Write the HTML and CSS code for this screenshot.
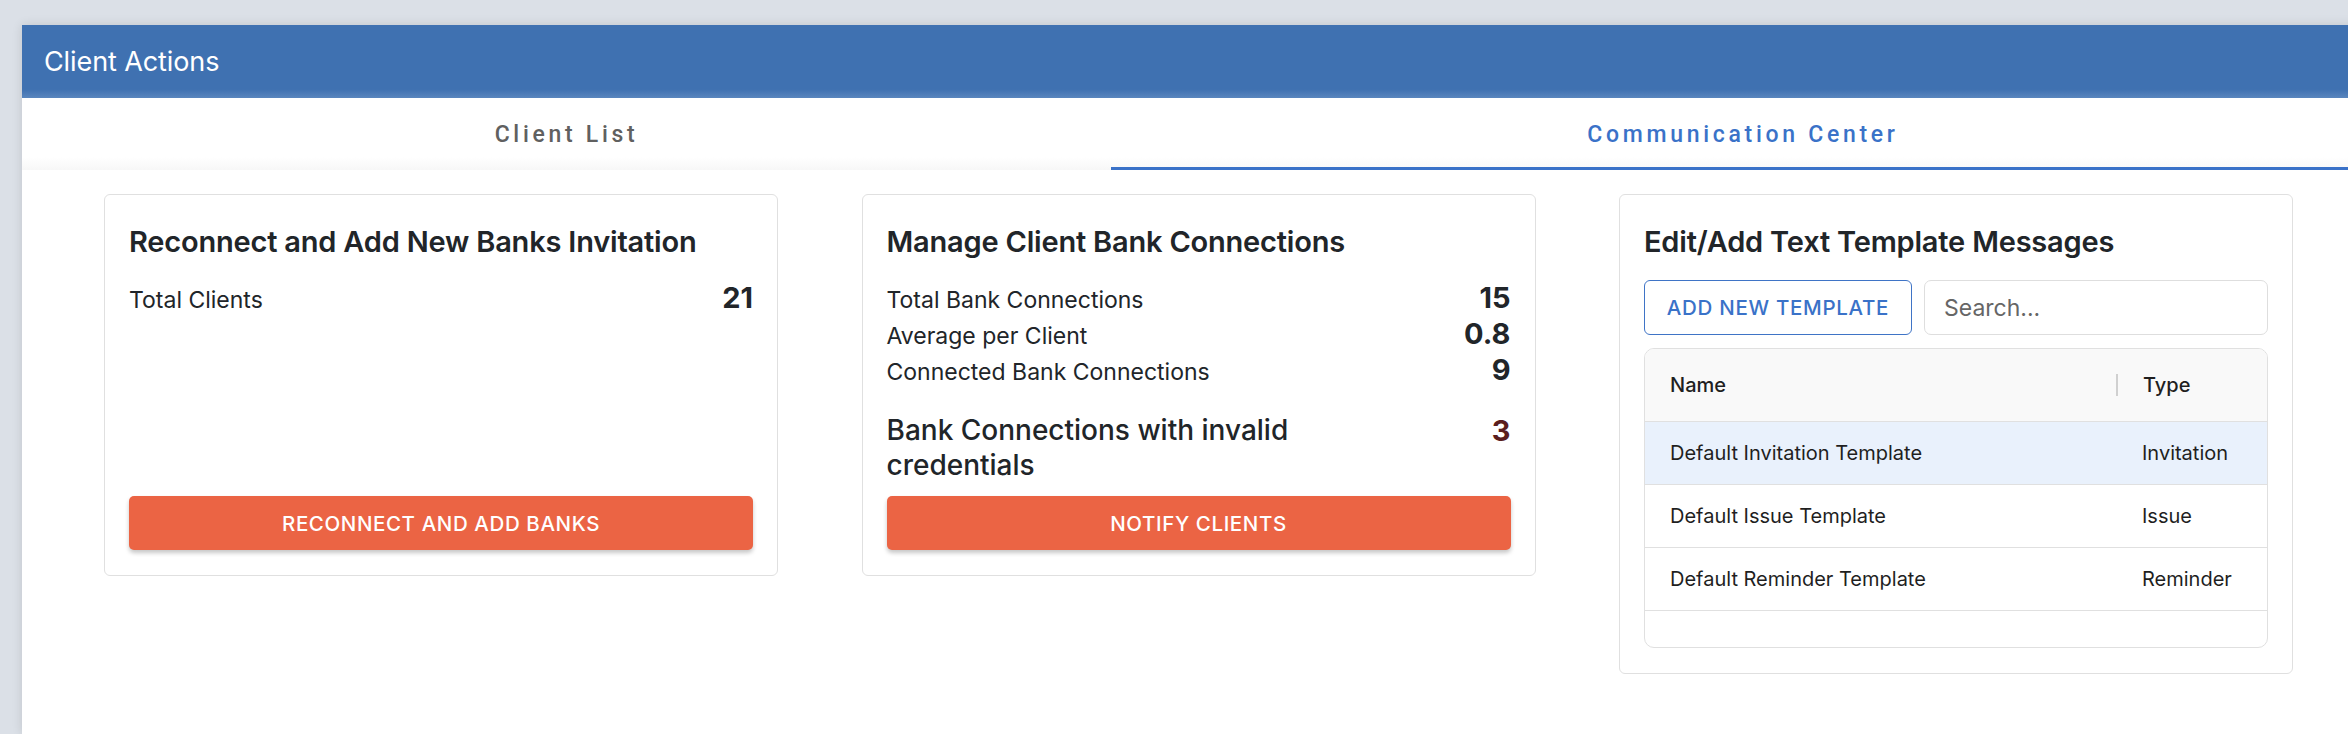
FILE: index.html
```html
<!DOCTYPE html>
<html lang="en">
<head>
<meta charset="utf-8">
<title>Client Actions</title>
<link rel="stylesheet" href="styles.css">
</head>
<body>
<div class="page">
  <div class="panel">
    <header class="panel-header">Client Actions</header>
    <nav class="tabs">
      <div class="tab">Client List</div>
      <div class="tab active">Communication Center</div>
    </nav>
    <main class="content">
      <section class="card stat-card">
        <h2 class="card-title">Reconnect and Add New Banks Invitation</h2>
        <div class="stats">
          <div class="stat-row"><span class="stat-label">Total Clients</span><span class="stat-value">21</span></div>
        </div>
        <button class="btn-primary">Reconnect and Add Banks</button>
      </section>

      <section class="card stat-card">
        <h2 class="card-title">Manage Client Bank Connections</h2>
        <div class="stats">
          <div class="stat-row"><span class="stat-label">Total Bank Connections</span><span class="stat-value">15</span></div>
          <div class="stat-row"><span class="stat-label">Average per Client</span><span class="stat-value">0.8</span></div>
          <div class="stat-row"><span class="stat-label">Connected Bank Connections</span><span class="stat-value">9</span></div>
        </div>
        <div class="invalid-row">
          <span class="invalid-label">Bank Connections with invalid credentials</span>
          <span class="invalid-value">3</span>
        </div>
        <button class="btn-primary">Notify Clients</button>
      </section>

      <section class="card template-card">
        <h2 class="card-title">Edit/Add Text Template Messages</h2>
        <div class="toolbar">
          <button class="btn-outline">Add New Template</button>
          <input class="search" type="text" placeholder="Search...">
        </div>
        <div class="grid-table">
          <div class="grid-head">
            <div class="cell col-name">Name</div>
            <div class="col-sep"></div>
            <div class="cell col-type">Type</div>
          </div>
          <div class="grid-row selected">
            <div class="cell col-name">Default Invitation Template</div>
            <div class="cell col-type">Invitation</div>
          </div>
          <div class="grid-row">
            <div class="cell col-name">Default Issue Template</div>
            <div class="cell col-type">Issue</div>
          </div>
          <div class="grid-row">
            <div class="cell col-name">Default Reminder Template</div>
            <div class="cell col-type">Reminder</div>
          </div>
          <div class="grid-filler"></div>
        </div>
      </section>
    </main>
  </div>
</div>
</body>
</html>
```

FILE: styles.css
```css
* { box-sizing: border-box; }

html, body {
  margin: 0;
  padding: 0;
  height: 100%;
}

body {
  background: #dbe0e7;
  overflow: hidden;
  font-family: Inter, "Liberation Sans", sans-serif;
  color: #212529;
}

.page {
  padding: 25px 0 0 22px;
}

.panel {
  width: 2353px;
  min-height: 709px;
  background: #fff;
  box-shadow: 0 0 10px rgba(0, 0, 0, 0.12);
}

.panel-header {
  height: 73px;
  display: flex;
  align-items: center;
  padding-left: 22px;
  background: linear-gradient(to bottom, #3f71b1 0, #3f71b1 88%, #5a86be 100%);
  color: #fff;
  font-size: 27px;
  font-weight: 400;
  letter-spacing: -0.1px;
}

.tabs {
  display: grid;
  grid-template-columns: 1089px 1fr;
  height: 72px;
  background: linear-gradient(to bottom, #fff 0, #fff 82%, #f7f7f7 100%);
}

.tab {
  display: flex;
  align-items: center;
  justify-content: center;
  padding-top: 3px;
  border-bottom: 3px solid transparent;
  font-family: Roboto, "Liberation Sans", sans-serif;
  font-size: 23px;
  font-weight: 500;
  letter-spacing: 3.7px;
  color: #606060;
}

.tab.active {
  color: #3a72c8;
  border-bottom-color: #3a72c8;
}

.content {
  display: grid;
  grid-template-columns: repeat(3, 674px);
  column-gap: 83.5px;
  align-items: start;
  padding: 24px 82px 0;
}

.card {
  border: 1px solid #e0e0e0;
  border-radius: 6px;
  background: #fff;
  padding: 30px 24px 25px;
}

.stat-card {
  min-height: 382px;
  display: flex;
  flex-direction: column;
}

.card-title {
  margin: 0;
  font-size: 29px;
  line-height: 34px;
  font-weight: 600;
  color: #212529;
  letter-spacing: -0.2px;
}

.stats {
  margin-top: 21px;
}

.stat-row {
  display: flex;
  justify-content: space-between;
  align-items: baseline;
  height: 36px;
  line-height: 36px;
}

.stat-label {
  font-size: 23px;
}

.stat-value {
  font-size: 29px;
  font-weight: 700;
}

.invalid-row {
  display: flex;
  justify-content: space-between;
  align-items: flex-start;
  margin-top: 25px;
}

.invalid-label {
  width: 440px;
  font-size: 28px;
  line-height: 35px;
  font-weight: 500;
}

.invalid-value {
  font-size: 29px;
  line-height: 35px;
  font-weight: 700;
  color: #5b1e1e;
}

.btn-primary {
  margin-top: auto;
  height: 54px;
  width: 100%;
  border: 0;
  border-radius: 5px;
  background: #eb6444;
  color: #fff;
  font-family: Inter, "Liberation Sans", sans-serif;
  font-size: 20.5px;
  font-weight: 500;
  letter-spacing: 0.6px;
  text-transform: uppercase;
  box-shadow: 0 3px 4px rgba(0, 0, 0, 0.22);
}

.toolbar {
  display: flex;
  gap: 12px;
  margin-top: 21px;
  height: 55px;
}

.btn-outline {
  flex: none;
  width: 268px;
  height: 55px;
  padding: 0;
  white-space: nowrap;
  border: 1.5px solid #3f74c6;
  border-radius: 6px;
  background: #fff;
  color: #3a72c8;
  font-family: Inter, "Liberation Sans", sans-serif;
  font-size: 20.5px;
  font-weight: 500;
  letter-spacing: 0.7px;
  text-transform: uppercase;
}

.search {
  flex: 1;
  min-width: 0;
  height: 55px;
  border: 1px solid #dedede;
  border-radius: 7px;
  padding: 0 19px;
  font-family: Inter, "Liberation Sans", sans-serif;
  font-size: 23px;
  color: #333;
  outline: none;
}

.search::placeholder {
  color: #666;
}

.grid-table {
  margin-top: 13px;
  border: 1px solid #e0e0e0;
  border-radius: 10px;
  overflow: hidden;
}

.grid-head {
  display: flex;
  align-items: center;
  height: 73px;
  background: #f9f9f9;
  border-bottom: 1px solid #e0e0e0;
  font-size: 20px;
  font-weight: 500;
  color: #1f1f1f;
}

.grid-row {
  display: flex;
  align-items: center;
  height: 63px;
  border-bottom: 1px solid #e0e0e0;
  font-size: 20px;
  color: #1f1f1f;
}

.grid-row.selected {
  background: #e9f1fc;
}

.cell {
  padding-left: 25px;
  white-space: nowrap;
}

.col-name {
  width: 471px;
}

.grid-row .col-name {
  width: 472px;
}

.col-sep {
  width: 2px;
  height: 22px;
  background: #d0d0d0;
}

.col-type {
  flex: 1;
}

.grid-filler {
  height: 36px;
}
```
